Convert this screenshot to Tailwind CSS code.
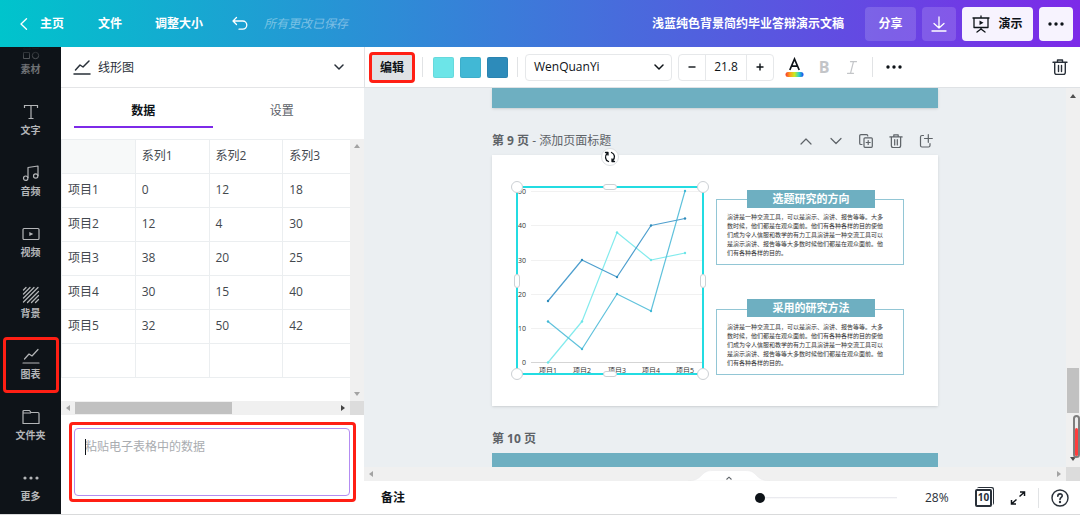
<!DOCTYPE html>
<html lang="zh-CN">
<head>
<meta charset="utf-8">
<meta name="viewport" content="width=device-width, initial-scale=1">
<title>浅蓝纯色背景简约毕业答辩演示文稿</title>
<script src="https://cdn.jsdelivr.net/npm/@tailwindcss/browser@4"></script>
</head>
<body class="flex h-screen flex-col overflow-hidden bg-white font-['Open_Sans','Noto_Sans_CJK_SC',sans-serif] text-xs text-[#0e1318]">

<header class="flex h-[47px] shrink-0 items-center bg-[linear-gradient(90deg,#00c4cc,#7d2ae8)] pr-[7px] pl-5 font-bold text-white">
  <nav class="flex items-center" aria-label="主菜单">
    <a href="#" class="flex items-center gap-3">
      <svg class="h-3 w-2" viewBox="0 0 8 12" fill="none" stroke="currentColor" stroke-width="1.3" stroke-linecap="round" stroke-linejoin="round"><path d="M6.5 .8 1 6l5.500 5.200"/></svg>主页</a>
    <button class="ml-[34px]">文件</button>
    <button class="ml-[33px]">调整大小</button>
    <button class="ml-[29px]" aria-label="撤销">
      <svg class="h-4 w-4" viewBox="0 0 16 16" fill="none" stroke="currentColor" stroke-width="1.3" stroke-linecap="round" stroke-linejoin="round"><path d="M4.500 1.500 1 5l3.500 3.500M1.300 5h9.400a4 4 0 0 1 0 8.200H7"/></svg>
    </button>
  </nav>
  <span class="ml-4 font-normal text-white/40 italic">所有更改已保存</span>
  <h1 class="ml-auto">浅蓝纯色背景简约毕业答辩演示文稿</h1>
  <div class="ml-[21px] flex gap-[6px]">
    <button class="h-[34px] w-[51px] rounded-sm bg-white/15">分享</button>
    <button class="flex h-[34px] w-[34px] items-center justify-center rounded-sm bg-white/15" aria-label="下载">
      <svg class="h-4 w-4" viewBox="0 0 16 16" fill="none" stroke="currentColor" stroke-width="1.300" stroke-linecap="round" stroke-linejoin="round"><path d="M8 1v11M3 7.500 8 12l5-4.500M1 15h14"/></svg>
    </button>
    <button class="flex h-[34px] w-[71px] items-center justify-center gap-2 rounded-sm bg-[#f7f3fe] text-[#0e1318]">
      <svg class="h-[18px] w-[18px]" viewBox="0 0 18 18" fill="none" stroke="currentColor" stroke-width="1.300" stroke-linecap="round" stroke-linejoin="round"><path d="M1 3h16M9 1v2M2 3v9.500h14V3M9 12.500V14M5 17l4-3 4 3"/><path d="m7.500 5.500 4 2.300-4 2.300z" fill="currentColor" stroke="none"/></svg>演示</button>
    <button class="flex h-[34px] w-[34px] items-center justify-center rounded-sm bg-[#f7f3fe] text-[#0e1318]" aria-label="更多选项">
      <svg class="h-1 w-4" viewBox="0 0 16 4" fill="currentColor"><circle cx="2" cy="2" r="1.700"/><circle cx="8" cy="2" r="1.700"/><circle cx="14" cy="2" r="1.700"/></svg>
    </button>
  </div>
</header>

<div class="flex min-h-0 flex-1 border-b border-[#d9dadb]">

  <nav class="relative w-[61px] shrink-0 overflow-hidden bg-[#0e1318] text-[10px] font-bold text-[#b4b6b8]" aria-label="素材面板">
    <div class="-mt-[18px] flex flex-col">
      <a href="#" class="flex h-[61px] flex-col items-center gap-[3px] pt-[13px] text-[#6e7174]">
        <svg class="h-[18px] w-[18px]" viewBox="0 0 18 18" fill="none" stroke="currentColor"><path d="M1.500 10.500h6v6h-6zM5 2l3.500 5h-7zM10.500 1.500h6v5h-6z"/><circle cx="13.500" cy="13.500" r="3.200"/></svg>素材</a>
      <a href="#" class="flex h-[61px] flex-col items-center gap-[3px] pt-[13px]">
        <svg class="h-[18px] w-[18px]" viewBox="0 0 18 18" fill="none" stroke="currentColor" stroke-width="1.200"><path d="M2.500 5V2.500h13V5M9 2.500v13M6.500 15.500h5"/></svg>文字</a>
      <a href="#" class="flex h-[61px] flex-col items-center gap-[3px] pt-[13px]">
        <svg class="h-[18px] w-[18px]" viewBox="0 0 18 18" fill="none" stroke="currentColor" stroke-width="1.200" stroke-linejoin="round"><path d="M6 14V3.500L16 2v10"/><circle cx="3.700" cy="14.200" r="2.200"/><circle cx="13.700" cy="12" r="2.200"/></svg>音频</a>
      <a href="#" class="flex h-[61px] flex-col items-center gap-[3px] pt-[13px]">
        <svg class="h-[18px] w-[18px]" viewBox="0 0 18 18" fill="none" stroke="currentColor" stroke-width="1.200"><rect x="1" y="3.500" width="16" height="11" rx="1"/><path d="m7.300 7 4 2-4 2z" fill="currentColor" stroke="none"/></svg>视频</a>
      <a href="#" class="flex h-[61px] flex-col items-center gap-[3px] pt-[13px]">
        <svg class="h-[18px] w-[18px]" viewBox="0 0 18 18" stroke="currentColor" stroke-width="1.300" stroke-linecap="round"><path d="M1.500 4 4 1.500M1.500 8 8 1.500M1.500 12 12 1.500M1.500 16 16 1.500M5.500 16.500 16.500 5.500M9.500 16.500l7-7M13.500 16.500l3-3"/></svg>背景</a>
      <a href="#" class="flex h-[61px] flex-col items-center gap-[3px] pt-[13px]" aria-current="page">
        <svg class="h-[18px] w-[18px]" viewBox="0 0 18 18" fill="none" stroke="currentColor" stroke-width="1.200" stroke-linecap="round" stroke-linejoin="round"><path d="M1 16h16M2.500 12 7 7l3 2 6-6.500"/></svg>图表</a>
      <a href="#" class="flex h-[61px] flex-col items-center gap-[3px] pt-[13px]">
        <svg class="h-[18px] w-[18px]" viewBox="0 0 18 18" fill="none" stroke="currentColor" stroke-width="1.200" stroke-linejoin="round"><path d="M1 15.500v-12q0-1 1-1h5.500l1.500 2h7q1 0 1 1v10zM1 5h8"/></svg>文件夹</a>
      <a href="#" class="flex h-[61px] flex-col items-center gap-[3px] pt-[13px]">
        <svg class="h-[18px] w-[18px]" viewBox="0 0 18 18" fill="currentColor"><circle cx="3" cy="9" r="1.600"/><circle cx="9" cy="9" r="1.600"/><circle cx="15" cy="9" r="1.600"/></svg>更多</a>
    </div>
    <div class="absolute inset-x-0 top-0 h-4 bg-linear-to-b from-[#0e1318] to-transparent"></div>
    <div class="absolute top-[290px] right-[2px] left-[3px] h-14 rounded-sm border-[3px] border-[#ff1f14]"></div>
  </nav>

  <section class="flex w-[303px] shrink-0 flex-col" aria-label="图表数据">
    <button class="flex h-[41px] shrink-0 items-center border-b border-[#e4e5e7] pr-5 pl-3 text-[#293039]">
      <svg class="h-[18px] w-[18px]" viewBox="0 0 18 18" fill="none" stroke="currentColor" stroke-width="1.500" stroke-linecap="round" stroke-linejoin="round"><path d="M1 16h16M2.500 12 7 7l3 2 6-6"/></svg>
      <span class="ml-[7px] pt-[2px]">线形图</span>
      <svg class="ml-auto h-[6px] w-[10px]" viewBox="0 0 10 6" fill="none" stroke="currentColor" stroke-width="1.500" stroke-linecap="round" stroke-linejoin="round"><path d="m1 1 4 4 4-4"/></svg>
    </button>
    <div class="flex h-[51px] shrink-0 px-[13px]" role="tablist">
      <button role="tab" aria-selected="true" class="mb-[11px] flex-1 border-b-2 border-[#7d2ae8] pt-2 font-bold">数据</button>
      <button role="tab" aria-selected="false" class="mb-[11px] flex-1 border-b-2 border-transparent pt-2 text-[#5c6168]">设置</button>
    </div>
    <div class="flex h-[262px] shrink-0">
      <div class="min-w-0 flex-1 overflow-hidden">
        <table class="w-[296px] table-fixed border-collapse text-left text-[#43484e] [&_td]:h-[34px] [&_td]:border [&_td]:border-[#ebeef0] [&_td]:px-[6px] [&_td]:pt-0 [&_td]:pb-[2px] [&_th]:h-[34px] [&_th]:border [&_th]:border-[#ebeef0] [&_th]:px-[6px] [&_th]:pt-0 [&_th]:pb-[2px] [&_th]:font-normal">
          <thead><tr><td class="bg-[#f7f9f9]"></td><th scope="col">系列1</th><th scope="col">系列2</th><th scope="col">系列3</th></tr></thead>
          <tbody>
            <tr><th scope="row">项目1</th><td>0</td><td>12</td><td>18</td></tr>
            <tr><th scope="row">项目2</th><td>12</td><td>4</td><td>30</td></tr>
            <tr><th scope="row">项目3</th><td>38</td><td>20</td><td>25</td></tr>
            <tr><th scope="row">项目4</th><td>30</td><td>15</td><td>40</td></tr>
            <tr><th scope="row">项目5</th><td>32</td><td>50</td><td>42</td></tr>
            <tr><td></td><td></td><td></td><td></td></tr>
          </tbody>
        </table>
      </div>
      <div class="flex w-[14px] flex-col items-center justify-between bg-[#f0f0f0] py-[5px] text-[#a3a3a3]">
        <svg class="h-[4px] w-[6px]" viewBox="0 0 6 4" fill="currentColor"><path d="M0 4 3 0l3 4z"/></svg>
        <svg class="h-[4px] w-[6px]" viewBox="0 0 6 4" fill="currentColor"><path d="m0 0 3 4 3-4z"/></svg>
      </div>
    </div>
    <div class="flex h-[14px] shrink-0 bg-[#f0f0f0]">
      <div class="flex flex-1 items-center pr-[5px] pl-[5px]">
        <svg class="h-[6px] w-[4px]" viewBox="0 0 4 6" fill="#a3a3a3"><path d="M4 0 0 3l4 3z"/></svg>
        <div class="ml-[5px] h-3 w-[157px] bg-[#c1c1c1]"></div>
        <svg class="ml-auto h-[6px] w-[4px]" viewBox="0 0 4 6" fill="#444"><path d="m0 0 4 3-4 3z"/></svg>
      </div>
      <div class="w-[14px] bg-[#dcdcdc]"></div>
    </div>
    <div class="relative mx-2 mt-[7px] flex h-20 shrink-0 rounded-sm border-[3px] border-[#ff1f14] p-[3px] pl-[2px]">
      <textarea aria-label="粘贴电子表格中的数据" class="min-w-0 flex-1 resize-none rounded-sm border border-[#b48cf2] px-[10px] py-2 leading-5 outline-none placeholder:text-[#a9acb0]" placeholder="粘贴电子表格中的数据"></textarea>
      <!-- text cursor -->
      <span class="absolute top-[14px] left-[13px] h-4 w-px bg-[#0e1318]"></span>
    </div>
  </section>

  <main class="flex min-w-0 flex-1 flex-col">
    <div class="flex h-[41px] shrink-0 items-center border-b border-l border-[#dfe2e5] pr-3 pl-1" role="toolbar" aria-label="编辑工具">
      <button class="h-[31px] w-[46px] rounded-sm border-[3px] border-[#ff1f14] bg-[#dfe2e5] pt-px font-bold">编辑</button>
      <span class="ml-[7px] h-5 w-px bg-[#e1e3e5]"></span>
      <div class="ml-[10px] flex gap-[6px]">
        <button class="h-[21px] w-[21px] rounded-xs border border-black/5 bg-[#6ce5e8]" aria-label="系列1颜色"></button>
        <button class="h-[21px] w-[21px] rounded-xs border border-black/5 bg-[#41b8d5]" aria-label="系列2颜色"></button>
        <button class="h-[21px] w-[21px] rounded-xs border border-black/5 bg-[#2d8bba]" aria-label="系列3颜色"></button>
      </div>
      <span class="ml-[9px] h-5 w-px bg-[#e1e3e5]"></span>
      <button class="ml-[7px] flex h-[27px] w-[147px] items-center justify-between rounded-sm border border-[#e6e8ea] pr-[7px] pl-2">WenQuanYi
        <svg class="h-[6px] w-[10px]" viewBox="0 0 10 6" fill="none" stroke="currentColor" stroke-width="1.500" stroke-linecap="round" stroke-linejoin="round"><path d="m1 1 4 4 4-4"/></svg>
      </button>
      <div class="ml-[6px] flex h-[27px] rounded-sm border border-[#e6e8ea]">
        <button class="flex w-[26px] items-center justify-center" aria-label="减小字号"><svg class="h-2 w-2" viewBox="0 0 8 8" stroke="currentColor" stroke-width="1.400"><path d="M.5 4h7"/></svg></button>
        <input aria-label="字号" class="w-[42px] border-x border-[#e6e8ea] text-center outline-none" value="21.8">
        <button class="flex w-[26px] items-center justify-center" aria-label="增大字号"><svg class="h-2 w-2" viewBox="0 0 8 8" stroke="currentColor" stroke-width="1.400"><path d="M.5 4h7M4 .5v7"/></svg></button>
      </div>
      <button class="ml-[11px]" aria-label="文字颜色">
        <svg class="h-5 w-[19px]" viewBox="0 0 19 20"><defs><linearGradient id="hue"><stop stop-color="#f43b2f"/><stop offset=".25" stop-color="#ff9f1c"/><stop offset=".5" stop-color="#c8ea20"/><stop offset=".75" stop-color="#2dd4c8"/><stop offset="1" stop-color="#1747f0"/></linearGradient></defs><path d="M4.800 13 9.500 2l4.700 11M6.500 9.200h6" fill="none" stroke="#0e1318" stroke-width="1.700"/><rect x=".5" y="15" width="18" height="5" rx="2.500" fill="url(#hue)"/></svg>
      </button>
      <button class="ml-[14px] w-3 text-base font-bold text-[#c3c5c8]" aria-label="粗体">B</button>
      <button class="ml-[17px]" aria-label="斜体"><svg class="h-[13px] w-[10px]" viewBox="0 0 10 13" fill="none" stroke="#c3c5c8" stroke-width="1.200" stroke-linecap="round"><path d="M3.500 .7h6M.5 12.300h6M6.500.7l-3 11.600"/></svg></button>
      <span class="ml-[15px] h-5 w-px bg-[#e1e3e5]"></span>
      <button class="ml-[13px]" aria-label="更多工具"><svg class="h-4 w-4" viewBox="0 0 16 16" fill="currentColor"><circle cx="2" cy="8" r="1.700"/><circle cx="8" cy="8" r="1.700"/><circle cx="14" cy="8" r="1.700"/></svg></button>
      <button class="ml-auto" aria-label="删除"><svg class="h-4 w-4" viewBox="0 0 16 16" fill="none" stroke="#293039" stroke-width="1.400" stroke-linecap="round" stroke-linejoin="round"><path d="M1 3.300h14M5.500 3V1h5v2M2.700 3.500v10q0 2 2 2h6.600q2 0 2-2v-10M6.500 6.500v6M9.500 6.500v6"/></svg></button>
    </div>

    <div class="flex min-h-0 flex-1">
      <div class="min-w-0 flex-1 overflow-hidden bg-[#ebeff2]">
        <div class="mx-auto flex w-[446px] flex-col">
          <div class="h-5 bg-[#6eafc1] shadow-sm"></div>
          <div class="mt-[22px] flex h-[22px] items-center text-[#5e6368]">
            <h2><b class="font-bold">第 9 页</b> - 添加页面标题</h2>
            <div class="ml-auto flex items-center gap-4 pr-[5px]">
              <button aria-label="上移"><svg class="h-[14px] w-[14px]" viewBox="0 0 14 14" fill="none" stroke="currentColor" stroke-width="1.200" stroke-linecap="round" stroke-linejoin="round"><path d="m2 10 5-5 5 5"/></svg></button>
              <button aria-label="下移"><svg class="h-[14px] w-[14px]" viewBox="0 0 14 14" fill="none" stroke="currentColor" stroke-width="1.200" stroke-linecap="round" stroke-linejoin="round"><path d="m2 4.500 5 5 5-5"/></svg></button>
              <button aria-label="复制页面"><svg class="h-[14px] w-[14px]" viewBox="0 0 14 14" fill="none" stroke="currentColor" stroke-width="1.200" stroke-linecap="round" stroke-linejoin="round"><path d="M3 10.500H2q-1.300 0-1.300-1.300V2Q.7.700 2 .7h5.500q1.300 0 1.300 1.300"/><rect x="5" y="3.800" width="8.300" height="9.500" rx="1"/><path d="M9.200 6.500v4M7.200 8.500h4"/></svg></button>
              <button aria-label="删除页面"><svg class="h-[14px] w-[14px]" viewBox="0 0 16 16" fill="none" stroke="currentColor" stroke-width="1.400" stroke-linecap="round" stroke-linejoin="round"><path d="M1 3.300h14M5.500 3V1h5v2M2.700 3.500v10q0 2 2 2h6.600q2 0 2-2v-10M6.500 6.500v6M9.500 6.500v6"/></svg></button>
              <button aria-label="添加页面"><svg class="h-[14px] w-[14px]" viewBox="0 0 14 14" fill="none" stroke="currentColor" stroke-width="1.200" stroke-linecap="round" stroke-linejoin="round"><path d="M4.500 1.500H3Q1.500 1.500 1.500 3v8.500q0 1.500 1.500 1.500h6.500q1.500 0 1.500-1.500V9.500M9.300.7v7.600M5.500 4.500h7.800"/></svg></button>
            </div>
          </div>

          <article class="mt-[3px] flex h-[251px] bg-white pt-[31px] pr-[34px] pl-6 shadow-sm">
            <div class="relative h-[189px] w-[188px]">
              <svg id="chart" class="h-[190px] w-[188px] overflow-visible font-['Open_Sans','Noto_Sans_CJK_SC',sans-serif] text-[7px]" viewBox="0 0 188 190" role="img" aria-label="线形图" fill="none">
                <path d="M15 5.500h171M15 39.500h171M15 74.500h171M15 108.500h171M15 142.500h171" stroke="#f1f1f1"/>
                <path d="M15 176.500h171" stroke="#d5d5d5"/>
                <g fill="#333">
                  <text x="2" y="8">50</text><text x="2" y="42">40</text><text x="2" y="77">30</text><text x="2" y="111">20</text><text x="2" y="145">10</text><text x="6" y="179">0</text>
                  <g text-anchor="middle"><text x="32" y="187">项目1</text><text x="66" y="187">项目2</text><text x="101" y="187">项目3</text><text x="135" y="187">项目4</text><text x="169" y="187">项目5</text></g>
                </g>
                <g stroke-width="1.200" stroke-linejoin="round">
                  <path d="M32 176.500 66 135.500 101 46.500 135 74 169 67" stroke="#83ebed"/>
                  <path d="M32 135.500 66 163 101 108 135 125 169 5" stroke="#60c2dc"/>
                  <path d="M32 115 66 74 101 91 135 39.500 169 32.500" stroke="#4e9fce"/>
                </g>
                <g fill="#6ce5e8"><circle cx="32" cy="176.500" r="1.200"/><circle cx="66" cy="135.500" r="1.200"/><circle cx="101" cy="46.500" r="1.200"/><circle cx="135" cy="74" r="1.200"/><circle cx="169" cy="67" r="1.200"/></g>
                <g fill="#41b8d5"><circle cx="32" cy="135.500" r="1.200"/><circle cx="66" cy="163" r="1.200"/><circle cx="101" cy="108" r="1.200"/><circle cx="135" cy="125" r="1.200"/><circle cx="169" cy="5" r="1.200"/></g>
                <g fill="#2d8bba"><circle cx="32" cy="115" r="1.200"/><circle cx="66" cy="74" r="1.200"/><circle cx="101" cy="91" r="1.200"/><circle cx="135" cy="39.500" r="1.200"/><circle cx="169" cy="32.500" r="1.200"/></g>
              </svg>
              <!-- selection frame, resize handles and rotate button -->
              <div class="absolute inset-0 border-2 border-[#23dce2]"></div>
              <span class="absolute -top-[5px] -left-[5px] size-3 rounded-full border border-[#ccd0d4] bg-white"></span>
              <span class="absolute -top-[5px] -right-[5px] size-3 rounded-full border border-[#ccd0d4] bg-white"></span>
              <span class="absolute -bottom-[5px] -left-[5px] size-3 rounded-full border border-[#ccd0d4] bg-white"></span>
              <span class="absolute -right-[5px] -bottom-[5px] size-3 rounded-full border border-[#ccd0d4] bg-white"></span>
              <span class="absolute -top-[2px] left-[87px] h-[6px] w-[14px] rounded-sm border border-[#ccd0d4] bg-white"></span>
              <span class="absolute -bottom-[2px] left-[87px] h-[6px] w-[14px] rounded-sm border border-[#ccd0d4] bg-white"></span>
              <span class="absolute top-[88px] -left-[2px] h-[14px] w-[6px] rounded-sm border border-[#ccd0d4] bg-white"></span>
              <span class="absolute top-[88px] -right-[2px] h-[14px] w-[6px] rounded-sm border border-[#ccd0d4] bg-white"></span>
              <button class="absolute -top-[38px] left-[85px] flex size-[18px] items-center justify-center rounded-full border border-[#dcdfe2] bg-white" aria-label="旋转">
                <svg class="h-3 w-3" viewBox="0 0 12 12" fill="none" stroke="#0e1318" stroke-width="1.300" stroke-linecap="round" stroke-linejoin="round"><path d="M4.500 10.500C1 9 .5 5 3.500 2M1.500 1.500h2.500V4M7.500 1.500c3.500 1.500 4 5.500 1 8.500M10.500 10.500H8V8"/></svg>
              </button>
            </div>
            <div class="ml-auto flex w-[188px] flex-col pt-[13px]">
              <section class="relative h-[66px] border border-[#92c6d5] px-[10px] pt-[13px]">
                <h3 class="absolute -top-[10px] right-7 left-[30px] h-[18px] bg-[#6eafc1] text-center text-[11px] leading-[18px] font-bold text-white">选题研究的方向</h3>
                <p class="text-[6px] leading-[9px] whitespace-nowrap text-[#333]">演讲是一种交流工具，可以是演示、演讲、报告等等。大多<br>数时候，他们都是在观众面前。他们有各种各样的目的使他<br>们成为令人信服和教学的有力工具演讲是一种交流工具可以<br>是演示演讲、报告等等大多数时候他们都是在观众面前。他<br>们有各种各样的目的。</p>
              </section>
              <section class="relative mt-11 h-[66px] border border-[#92c6d5] px-[10px] pt-[13px]">
                <h3 class="absolute -top-[11px] right-7 left-[30px] h-[18px] bg-[#6eafc1] text-center text-[11px] leading-[18px] font-bold text-white">采用的研究方法</h3>
                <p class="text-[6px] leading-[9px] whitespace-nowrap text-[#333]">演讲是一种交流工具，可以是演示、演讲、报告等等。大多<br>数时候，他们都是在观众面前。他们有各种各样的目的使他<br>们成为令人信服和教学的有力工具演讲是一种交流工具可以<br>是演示演讲、报告等等大多数时候他们都是在观众面前。他<br>们有各种各样的目的。</p>
              </section>
            </div>
          </article>

          <h2 class="mt-[22px] flex h-[22px] items-center font-bold text-[#5e6368]">第 10 页</h2>
          <div class="mt-[3px] h-[60px] bg-[#6eafc1]"></div>
        </div>
      </div>
      <div class="relative flex w-[14px] flex-col items-center bg-[#f0f0f0] pt-[6px]">
        <svg class="h-[4px] w-[6px]" viewBox="0 0 6 4" fill="#505050"><path d="M0 4 3 0l3 4z"/></svg>
        <div class="mt-auto mb-[54px] h-[45px] w-3 bg-[#c1c1c1]"></div>
        <svg class="absolute bottom-[6px] left-[4px] h-[4px] w-[6px]" viewBox="0 0 6 4" fill="#505050"><path d="m0 0 3 4 3-4z"/></svg>
        <span class="absolute right-0 bottom-[9px] flex h-[43px] w-[7px] items-end rounded-full border-2 border-[#7d7d7d] bg-[#ececec]"><span class="h-7 w-full rounded-full bg-[#ff3c3c]"></span></span>
      </div>
    </div>

    <div class="relative flex h-[14px] shrink-0 bg-[#f0f0f0]">
      <div class="flex flex-1 items-center justify-between px-[5px] text-[#a3a3a3]">
        <svg class="h-[6px] w-[4px]" viewBox="0 0 4 6" fill="currentColor"><path d="M4 0 0 3l4 3z"/></svg>
        <svg class="h-[6px] w-[4px]" viewBox="0 0 4 6" fill="currentColor"><path d="m0 0 4 3-4 3z"/></svg>
      </div>
      <div class="w-[14px] bg-[#dcdcdc]"></div>
      <button class="absolute bottom-0 left-[324px]" aria-label="展开备注">
        <svg class="h-[11px] w-[82px]" viewBox="0 0 82 11" fill="none"><path d="M0 11C15 11 12 .5 24 .5h34C70 .5 67 11 82 11z" fill="#fff" stroke="#e8e9eb" stroke-width=".5"/><path d="m38.500 9.500 2.500-2.300 2.500 2.300" stroke="#5e6368" stroke-width="1.100"/></svg>
      </button>
    </div>

    <footer class="flex h-[33px] shrink-0 items-center pr-[11px] pl-[17px]">
      <button class="pt-px font-bold">备注</button>
      <input type="range" aria-label="缩放" min="0" max="100" value="0" class="ml-auto h-3 w-[142px] appearance-none bg-linear-to-b from-transparent from-42% via-[#e3e4ea] via-42% to-transparent to-58% outline-none [&::-webkit-slider-thumb]:size-[10px] [&::-webkit-slider-thumb]:appearance-none [&::-webkit-slider-thumb]:rounded-full [&::-webkit-slider-thumb]:bg-[#0e1318]">
      <span class="ml-7 w-[25px] text-[#293039]">28%</span>
      <button class="ml-[25px]" aria-label="共 10 页">
        <span class="relative mr-[2px] flex h-[18px] w-[17px] items-center justify-center rounded-xs border-2 border-[#293039] bg-white text-[10px] font-bold text-[#293039] shadow-[1px_-1px_0_#fff,2px_-2px_0_#293039]">10</span>
      </button>
      <button class="ml-4" aria-label="全屏"><svg class="h-4 w-4" viewBox="0 0 16 16" fill="none" stroke="#0e1318" stroke-width="1.500"><path d="m9.500 6.500 4.500-4M10 2h4.500v4M6.500 9.500l-4.500 4M1.500 10v4H6"/></svg></button>
      <span class="ml-3 h-5 w-px bg-[#e1e3e5]"></span>
      <button class="ml-3" aria-label="帮助"><svg class="h-[18px] w-[18px]" viewBox="0 0 18 18" fill="none" stroke="#293039" stroke-width="1.400"><circle cx="9" cy="9" r="8"/><path d="M6.800 7.200C6.800 4 11.500 4.200 11.200 7c-.1 1.400-2.200 1.500-2.200 3.400" stroke-linecap="round" stroke-width="1.600"/><circle cx="9" cy="13" r=".5" fill="#293039"/></svg></button>
    </footer>
  </main>
</div>
</body>
</html>
